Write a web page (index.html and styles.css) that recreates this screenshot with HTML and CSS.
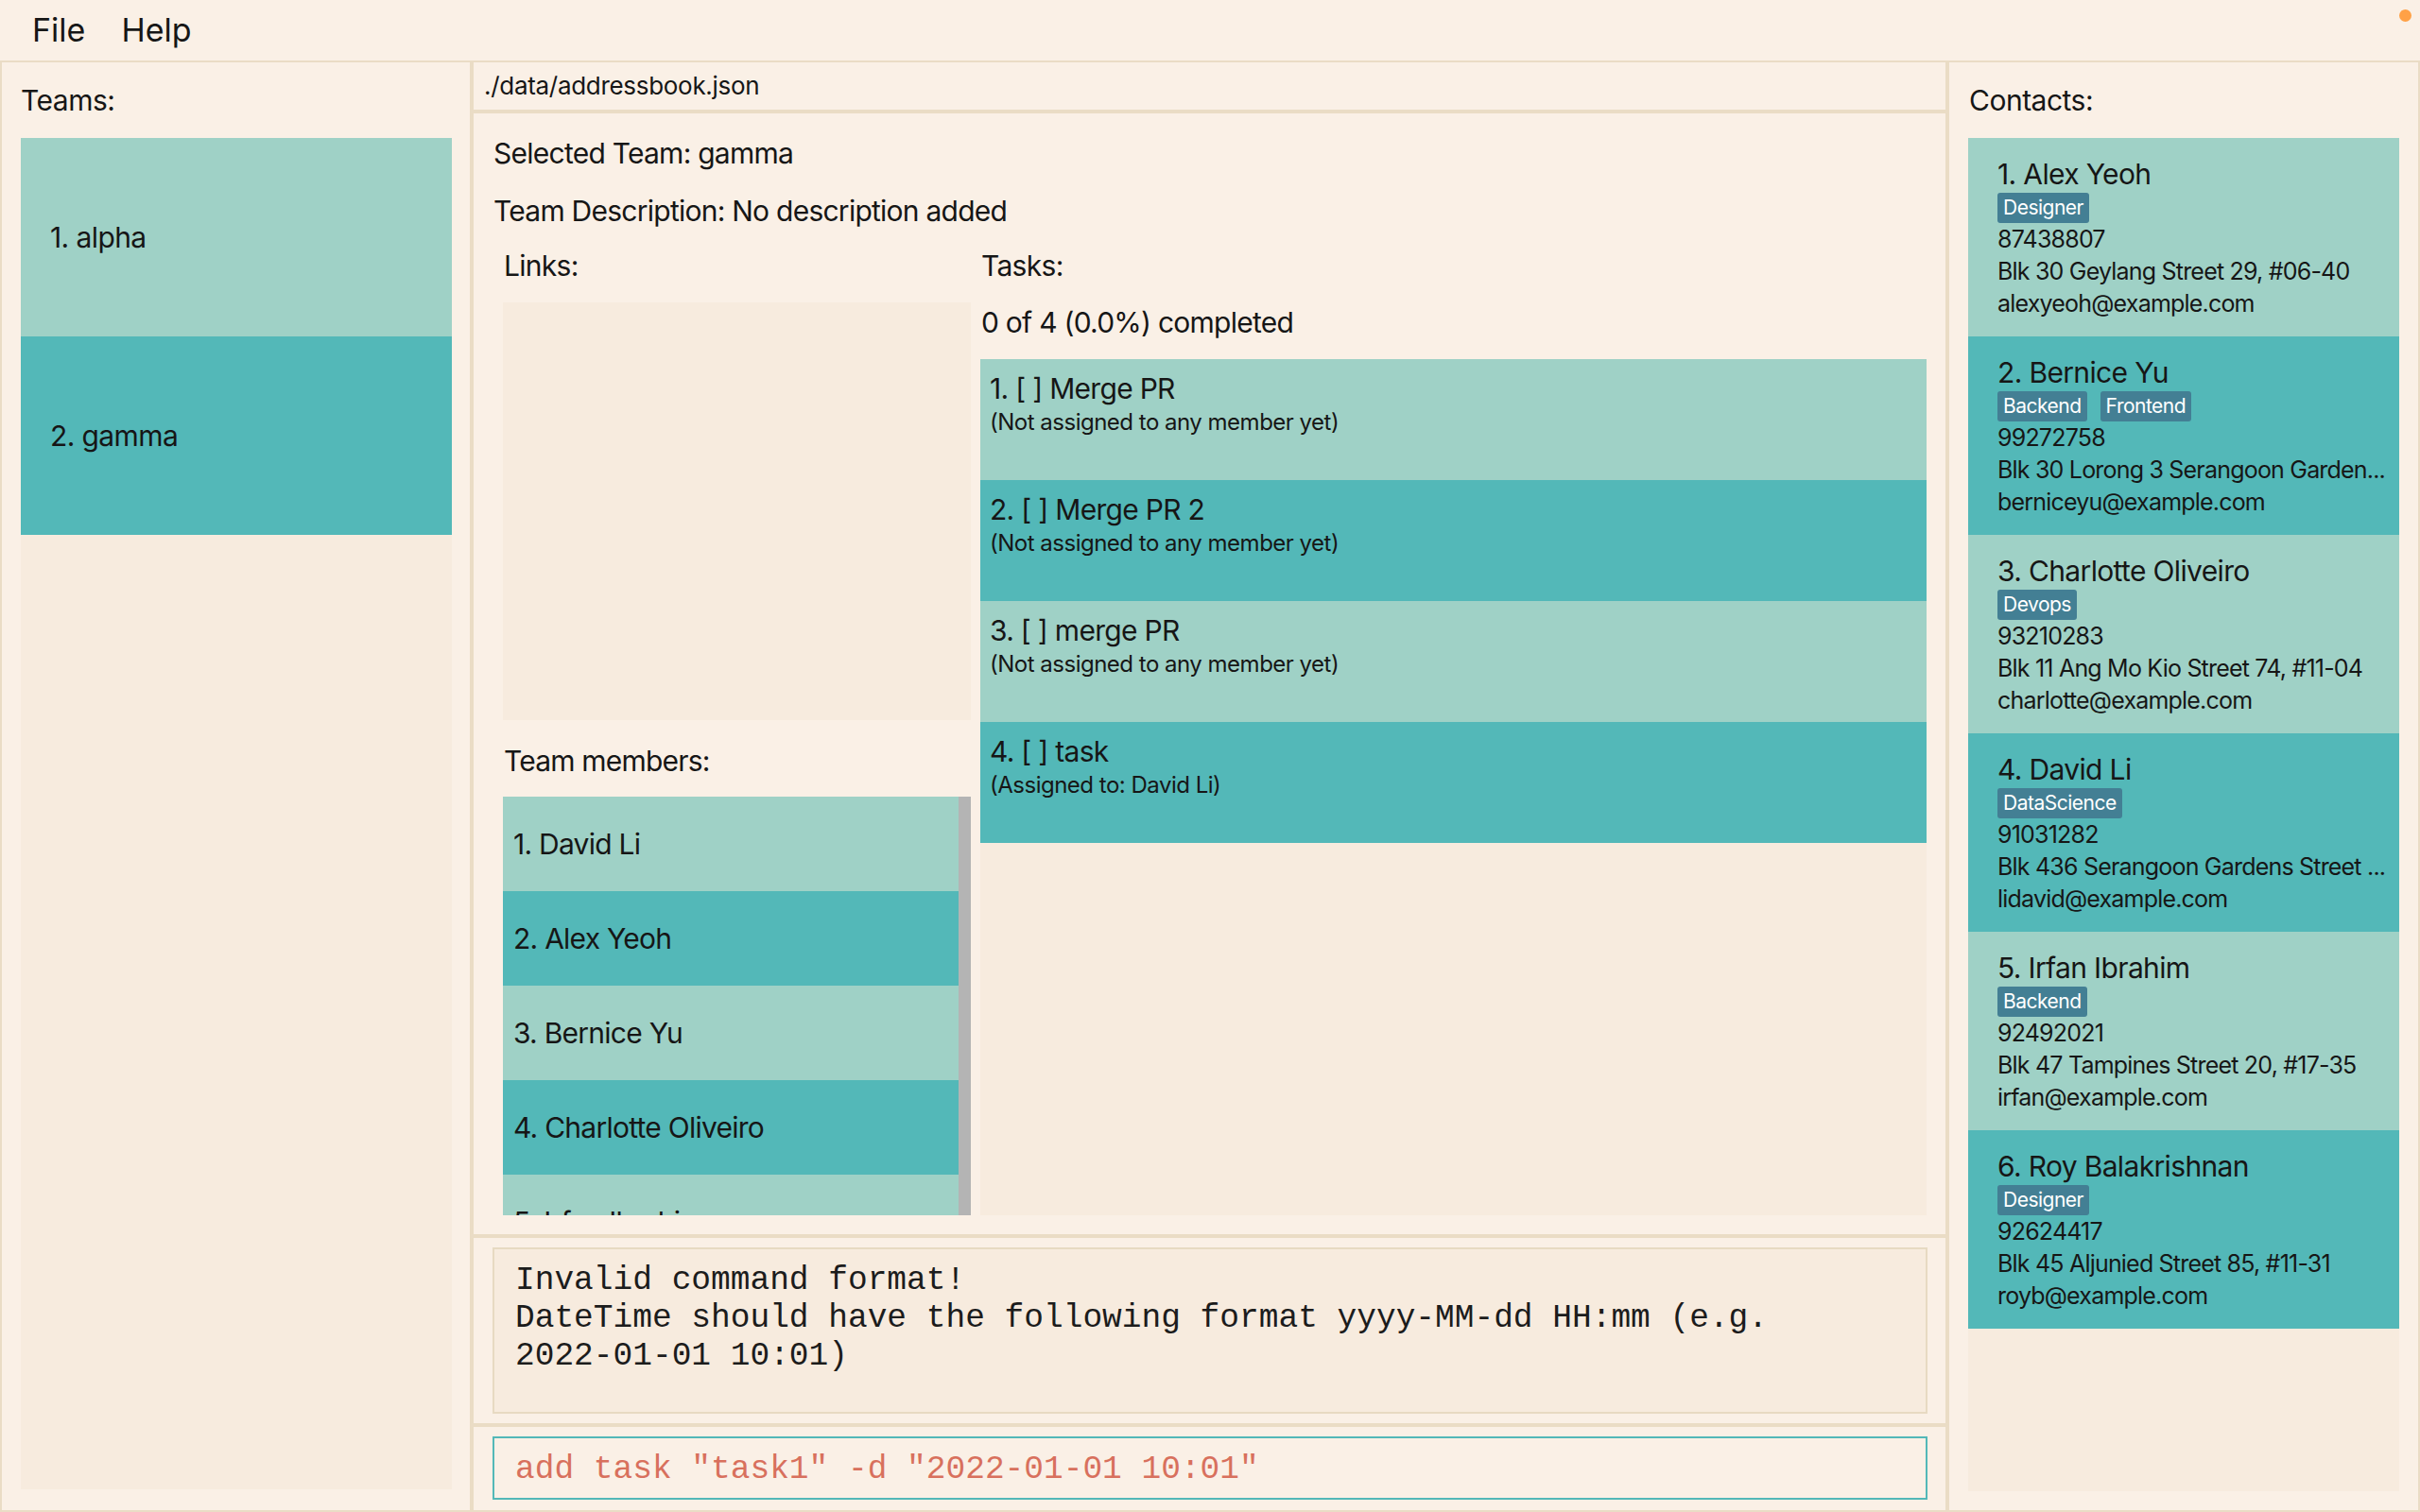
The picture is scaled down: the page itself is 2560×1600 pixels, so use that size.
FILE: index.html
```html
<!DOCTYPE html>
<html lang="en">
<head>
<meta charset="utf-8">
<title>Address Book</title>
<link rel="stylesheet" href="styles.css">
</head>
<body>
<div class="window">
  <div class="menubar">
    <span class="menu">File</span>
    <span class="menu">Help</span>
    <span class="dot"></span>
  </div>
  <div class="main">
    <section class="panel left">
      <div class="panel-title">Teams:</div>
      <ul class="list teams">
        <li class="team light">1. alpha</li>
        <li class="team dark">2. gamma</li>
      </ul>
    </section>

    <section class="panel middle">
      <div class="pathbar">./data/addressbook.json</div>
      <div class="details">
        <div class="line">Selected Team: gamma</div>
        <div class="line">Team Description: No description added</div>
        <div class="cols">
          <div class="col col-left">
            <div class="sub">Links:</div>
            <div class="links-box"></div>
            <div class="sub members-title">Team members:</div>
            <div class="members">
              <ul class="member-list">
                <li class="member light">1. David Li</li>
                <li class="member dark">2. Alex Yeoh</li>
                <li class="member light">3. Bernice Yu</li>
                <li class="member dark">4. Charlotte Oliveiro</li>
                <li class="member light">5. Irfan Ibrahim</li>
              </ul>
              <div class="scrollbar"></div>
            </div>
          </div>
          <div class="col col-right">
            <div class="sub">Tasks:</div>
            <div class="progress">0 of 4 (0.0%) completed</div>
            <ul class="list tasks">
              <li class="task light">
                <div class="task-title">1. [ ] Merge PR</div>
                <div class="task-sub">(Not assigned to any member yet)</div>
              </li>
              <li class="task dark">
                <div class="task-title">2. [ ] Merge PR 2</div>
                <div class="task-sub">(Not assigned to any member yet)</div>
              </li>
              <li class="task light">
                <div class="task-title">3. [ ] merge PR</div>
                <div class="task-sub">(Not assigned to any member yet)</div>
              </li>
              <li class="task dark">
                <div class="task-title">4. [ ] task</div>
                <div class="task-sub">(Assigned to: David Li)</div>
              </li>
            </ul>
          </div>
        </div>
      </div>
      <div class="result-area">
        <div class="result">Invalid command format!<br>DateTime should have the following format yyyy-MM-dd HH:mm (e.g.<br>2022-01-01 10:01)</div>
      </div>
      <div class="command-area">
        <div class="command">add task "task1" -d "2022-01-01 10:01"</div>
      </div>
    </section>

    <section class="panel right">
      <div class="panel-title">Contacts:</div>
      <ul class="list contacts">
        <li class="card light">
          <div class="name">1. Alex Yeoh</div>
          <div class="tags"><span class="tag">Designer</span></div>
          <div class="info">87438807</div>
          <div class="info">Blk 30 Geylang Street 29, #06-40</div>
          <div class="info">alexyeoh@example.com</div>
        </li>
        <li class="card dark">
          <div class="name">2. Bernice Yu</div>
          <div class="tags"><span class="tag">Backend</span><span class="tag">Frontend</span></div>
          <div class="info">99272758</div>
          <div class="info">Blk 30 Lorong 3 Serangoon Garden...</div>
          <div class="info">berniceyu@example.com</div>
        </li>
        <li class="card light">
          <div class="name">3. Charlotte Oliveiro</div>
          <div class="tags"><span class="tag">Devops</span></div>
          <div class="info">93210283</div>
          <div class="info">Blk 11 Ang Mo Kio Street 74, #11-04</div>
          <div class="info">charlotte@example.com</div>
        </li>
        <li class="card dark">
          <div class="name">4. David Li</div>
          <div class="tags"><span class="tag">DataScience</span></div>
          <div class="info">91031282</div>
          <div class="info">Blk 436 Serangoon Gardens Street ...</div>
          <div class="info">lidavid@example.com</div>
        </li>
        <li class="card light">
          <div class="name">5. Irfan Ibrahim</div>
          <div class="tags"><span class="tag">Backend</span></div>
          <div class="info">92492021</div>
          <div class="info">Blk 47 Tampines Street 20, #17-35</div>
          <div class="info">irfan@example.com</div>
        </li>
        <li class="card dark">
          <div class="name">6. Roy Balakrishnan</div>
          <div class="tags"><span class="tag">Designer</span></div>
          <div class="info">92624417</div>
          <div class="info">Blk 45 Aljunied Street 85, #11-31</div>
          <div class="info">royb@example.com</div>
        </li>
      </ul>
    </section>
  </div>
</div>
</body>
</html>
```

FILE: styles.css
```css
* { box-sizing: border-box; }

html, body {
  margin: 0;
  padding: 0;
}

body {
  width: 2560px;
  height: 1600px;
  overflow: hidden;
  background: #faf0e6;
  color: #161616;
  font-family: Inter, "Noto Sans", sans-serif;
  font-size: 30px;
}

ul { list-style: none; margin: 0; padding: 0; }

.window {
  height: 1600px;
  display: flex;
  flex-direction: column;
}

/* ---------- menu bar ---------- */
.menubar {
  position: relative;
  height: 66px;
  flex: none;
  display: flex;
  align-items: center;
  gap: 38px;
  padding-left: 34px;
  padding-bottom: 2px;
  border-bottom: 2px solid #eadcc5;
  font-size: 34px;
  letter-spacing: 0;
}

.dot {
  position: absolute;
  right: 9px;
  top: 10px;
  width: 13px;
  height: 13px;
  border-radius: 50%;
  background: #ffa146;
}

/* ---------- main layout ---------- */
.main {
  flex: 1;
  min-height: 0;
  display: flex;
  gap: 4px;
  background: #eadcc5;
  border: 2px solid #eadcc5;
  border-top: none;
}

.panel {
  background: #faf0e6;
  display: flex;
  flex-direction: column;
  min-height: 0;
}

.panel-title {
  flex: none;
  height: 80px;
  padding-top: 2px;
  line-height: 76px;
  letter-spacing: -0.5px;
}

.left {
  width: 495px;
  padding: 0 19px 22px 20px;
}

.right {
  width: 496px;
  padding: 0 20px 20px 20px;
}

.right .panel-title { padding-left: 1px; }

.list {
  flex: 1;
  min-height: 0;
  background: #f7ebde;
  overflow: hidden;
}

.light { background: #9fd1c6; }
.dark { background: #53b8b8; }

/* teams */
.team {
  height: 210px;
  display: flex;
  align-items: center;
  padding-left: 31px;
  font-size: 30px;
  letter-spacing: -0.6px;
}

/* ---------- middle ---------- */
.middle {
  flex: 1;
  gap: 4px;
  background: #eadcc5;
}

.middle > div { background: #faf0e6; }

.pathbar {
  flex: none;
  height: 50px;
  line-height: 50px;
  padding-left: 11px;
  font-size: 26px;
  letter-spacing: -0.3px;
}

.details {
  flex: 1;
  min-height: 0;
  display: flex;
  flex-direction: column;
  padding: 12px 20px 20px 21px;
}

.line {
  flex: none;
  height: 61px;
  line-height: 61px;
  letter-spacing: -0.75px;
}

.cols {
  flex: 1;
  min-height: 0;
  display: flex;
  gap: 10px;
  margin-left: 10px;
}

.col {
  display: flex;
  flex-direction: column;
  min-height: 0;
}

.col-left { width: 495px; flex: none; }
.col-right { flex: 1; }

.sub {
  flex: none;
  height: 61px;
  line-height: 55px;
  letter-spacing: -0.7px;
  padding-left: 1px;
}

.links-box {
  flex: none;
  height: 442px;
  margin-top: 5px;
  background: #f7ebde;
}

.members-title {
  height: 60px;
  line-height: 60px;
  margin-top: 13px;
  margin-bottom: 8px;
  font-size: 30px;
  letter-spacing: -0.8px;
}

.members {
  flex: 1;
  min-height: 0;
  display: flex;
  overflow: hidden;
}

.member-list {
  flex: 1;
  overflow: hidden;
}

.member {
  height: 100px;
  display: flex;
  align-items: center;
  padding-left: 11px;
  font-size: 30px;
  letter-spacing: -0.75px;
}

.scrollbar {
  width: 13px;
  flex: none;
  background: #b4b4b4;
}

.progress {
  flex: none;
  height: 52px;
  line-height: 52px;
  margin-bottom: 13px;
  padding-left: 1px;
  letter-spacing: -0.75px;
}

.task {
  height: 128px;
  padding: 13px 0 0 10px;
}

.task-title {
  font-size: 30px;
  line-height: 36px;
  letter-spacing: -0.7px;
}

.task-sub {
  margin-top: 3px;
  font-size: 24px;
  line-height: 30px;
  letter-spacing: -0.5px;
}

/* result + command */
.result-area {
  flex: none;
  height: 196px;
  padding: 10px 19px 10px 20px;
}

.result {
  height: 100%;
  border: 2px solid #e7dac2;
  background: #f7ebde;
  padding: 13px 22px 0;
  font-family: "Liberation Mono", "DejaVu Sans Mono", monospace;
  font-size: 34.5px;
  line-height: 40px;
  color: #1c1c1c;
}

.command-area {
  flex: none;
  height: 88px;
  padding: 10px 19px 11px 20px;
}

.command {
  height: 100%;
  border: 2px solid #53b8b8;
  display: flex;
  align-items: center;
  padding-left: 22px;
  padding-top: 2px;
  font-family: "Liberation Mono", "DejaVu Sans Mono", monospace;
  font-size: 34.5px;
  color: #d8705d;
  white-space: pre;
}

/* contacts */
.card {
  height: 210px;
  padding: 20px 0 0 31px;
}

.name {
  font-size: 30px;
  line-height: 36px;
  letter-spacing: -0.65px;
}

.tags {
  margin-top: 2px;
  height: 32px;
  display: flex;
  gap: 14px;
}

.tag {
  height: 32px;
  line-height: 32px;
  padding: 0 6px;
  border-radius: 3px;
  background: #437f94;
  color: #ffffff;
  font-size: 21px;
  letter-spacing: -0.5px;
}

.info {
  font-size: 25px;
  line-height: 34px;
  letter-spacing: -0.8px;
  white-space: nowrap;
}
```
